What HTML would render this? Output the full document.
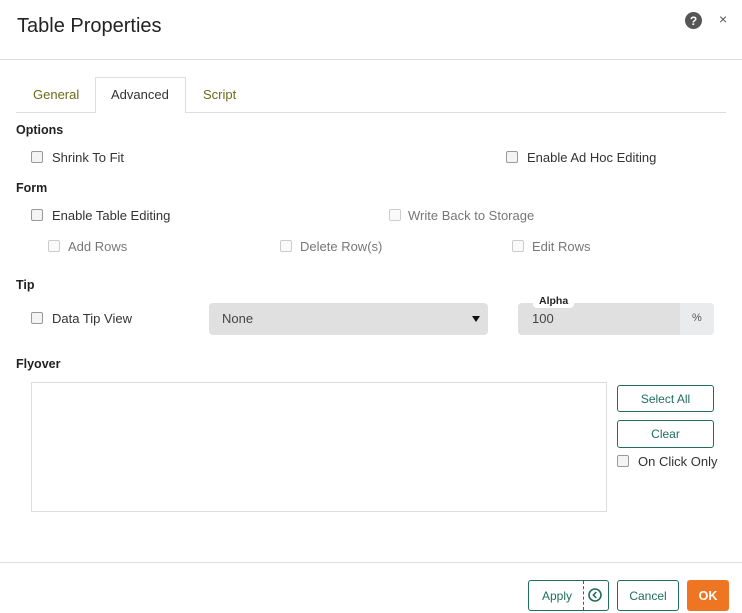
<!DOCTYPE html>
<html><head><style>
*{box-sizing:border-box;margin:0;padding:0}
body{width:742px;height:613px;background:#fff;font-family:"Liberation Sans",sans-serif;font-size:13px;color:#333;position:relative;overflow:hidden}
.a{position:absolute;white-space:nowrap}
.cb{position:absolute;width:12px;height:12px;border:1px solid #999;border-radius:2px;background:#f4f4f4}
.cb.d{border-color:#ccc;background:#fafafa}
.dis{color:#777}
.b{font-weight:bold;font-size:12.5px;color:#222}
.btn{position:absolute;border:1px solid #1f6e5e;border-radius:3px;color:#1f6e5e;font-size:12px;display:flex;align-items:center;justify-content:center;background:#fff}
</style></head><body>
<div class="a" style="left:17px;top:15px;font-size:20px;color:#222">Table Properties</div>
<svg class="a" style="left:685px;top:12px" width="17" height="17"><circle cx="8.5" cy="8.5" r="8.5" fill="#555"/><text x="8.5" y="13" font-size="12" font-weight="bold" fill="#fff" text-anchor="middle" font-family="Liberation Sans">?</text></svg>
<div class="a" style="left:719px;top:11px;font-size:14px;color:#555">×</div>
<div class="a" style="left:0;top:59px;width:742px;height:1px;background:#ddd"></div>

<div class="a" style="left:16px;top:112px;width:710px;height:1px;background:#ddd"></div>
<div class="a" style="left:95px;top:77px;width:91px;height:36px;border:1px solid #ddd;border-bottom:none;background:#fff"></div>
<div class="a" style="left:33px;top:87px;color:#6b6b1a">General</div>
<div class="a" style="left:111px;top:87px;color:#333">Advanced</div>
<div class="a" style="left:203px;top:87px;color:#6b6b1a">Script</div>

<div class="a b" style="left:16px;top:123px">Options</div>
<div class="cb" style="left:31px;top:151px"></div><div class="a" style="left:52px;top:150px">Shrink To Fit</div>
<div class="cb" style="left:506px;top:151px"></div><div class="a" style="left:527px;top:150px">Enable Ad Hoc Editing</div>

<div class="a b" style="left:16px;top:181px">Form</div>
<div class="cb" style="left:31px;top:209px"></div><div class="a" style="left:52px;top:208px">Enable Table Editing</div>
<div class="cb d" style="left:389px;top:209px"></div><div class="a dis" style="left:408px;top:208px">Write Back to Storage</div>
<div class="cb d" style="left:48px;top:240px"></div><div class="a dis" style="left:68px;top:239px">Add Rows</div>
<div class="cb d" style="left:280px;top:240px"></div><div class="a dis" style="left:300px;top:239px">Delete Row(s)</div>
<div class="cb d" style="left:512px;top:240px"></div><div class="a dis" style="left:532px;top:239px">Edit Rows</div>

<div class="a b" style="left:16px;top:278px">Tip</div>
<div class="cb" style="left:31px;top:312px"></div><div class="a" style="left:52px;top:311px">Data Tip View</div>
<div class="a" style="left:209px;top:303px;width:279px;height:32px;background:#e0e0e0;border-radius:4px"></div>
<div class="a" style="left:222px;top:311px;color:#444">None</div>
<div class="a" style="left:472px;top:316px;width:0;height:0;border-left:4px solid transparent;border-right:4px solid transparent;border-top:6px solid #111"></div>
<div class="a" style="left:518px;top:303px;width:196px;height:32px;background:#e0e0e0;border-radius:4px;overflow:hidden"><div style="position:absolute;right:0;top:0;width:34px;height:32px;background:#e9ebed"></div></div>
<div class="a" style="left:532px;top:311px;color:#444">100</div>
<div class="a" style="left:692px;top:312px;font-size:11px;color:#555">%</div>
<div class="a" style="left:533px;top:295px;padding:0 6px;background:#fff;border-radius:0 0 4px 4px;font-size:10.5px;font-weight:bold;color:#222;line-height:13px">Alpha</div>

<div class="a b" style="left:16px;top:357px">Flyover</div>
<div class="a" style="left:31px;top:382px;width:576px;height:130px;border:1px solid #ddd"></div>
<div class="btn" style="left:617px;top:385px;width:97px;height:27px">Select All</div>
<div class="btn" style="left:617px;top:420px;width:97px;height:28px">Clear</div>
<div class="cb" style="left:617px;top:455px"></div><div class="a" style="left:638px;top:454px">On Click Only</div>

<div class="a" style="left:0;top:562px;width:742px;height:1px;background:#ddd"></div>
<div class="btn" style="left:528px;top:580px;width:81px;height:31px;justify-content:flex-start;padding-left:13px">Apply</div>
<div class="a" style="left:583px;top:581px;height:29px;border-left:1px dashed #1f6e5e"></div>
<svg class="a" style="left:588px;top:588px" width="14" height="14"><circle cx="7" cy="7" r="6" fill="none" stroke="#1f6e5e" stroke-width="1.6"/><path d="M8.3 4 L5.4 7 L8.3 10" fill="none" stroke="#1f6e5e" stroke-width="1.6"/></svg>
<div class="btn" style="left:617px;top:580px;width:62px;height:31px">Cancel</div>
<div class="a" style="left:687px;top:580px;width:42px;height:31px;background:#ee7623;border-radius:3px;color:#fff;font-weight:bold;font-size:12.5px;display:flex;align-items:center;justify-content:center">OK</div>
</body></html>
